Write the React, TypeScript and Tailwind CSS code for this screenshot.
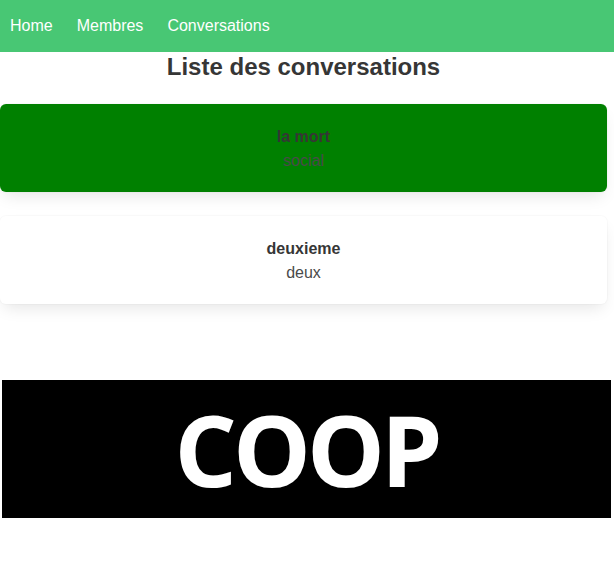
const conversations = [
  { title: "la mort", subject: "social", active: true },
  { title: "deuxieme", subject: "deux", active: false },
];

export default function App() {
  return (
    <div className="min-h-[570px] bg-white font-['Liberation_Sans',Arial,sans-serif] text-[#363636]">
      <nav className="flex h-[52px] items-center gap-6 bg-[#48c774] pl-[10px] text-base text-white">
        <a>Home</a>
        <a>Membres</a>
        <a>Conversations</a>
      </nav>

      <h1 className="w-[607px] pt-px text-center text-2xl leading-[27px] font-bold">
        Liste des conversations
      </h1>

      <div className="mt-6 flex w-[607px] flex-col gap-6">
        {conversations.map((c) => (
          <div
            key={c.title}
            className={
              c.active
                ? "flex h-[88px] flex-col items-center justify-center rounded-md bg-[#008000] pt-[2px] shadow-[0_8px_16px_-4px_rgba(10,10,10,0.1),0_0_0_1px_rgba(10,10,10,0.02)]"
                : "flex h-[88px] flex-col items-center justify-center rounded-md bg-white pt-[2px] shadow-[0_8px_16px_-4px_rgba(10,10,10,0.1),0_0_0_1px_rgba(10,10,10,0.02)]"
            }
          >
            <div className="leading-6 font-bold">{c.title}</div>
            <div className="leading-6 text-[#4a4a4a]">{c.subject}</div>
          </div>
        ))}
      </div>

      <div className="mx-[2px] mt-[76px] flex h-[138px] w-[609px] items-center justify-center bg-black">
        <span className="font-['Open_Sans',sans-serif] text-[98px] leading-none font-bold tracking-[-4px] text-white">
          COOP
        </span>
      </div>
    </div>
  );
}
